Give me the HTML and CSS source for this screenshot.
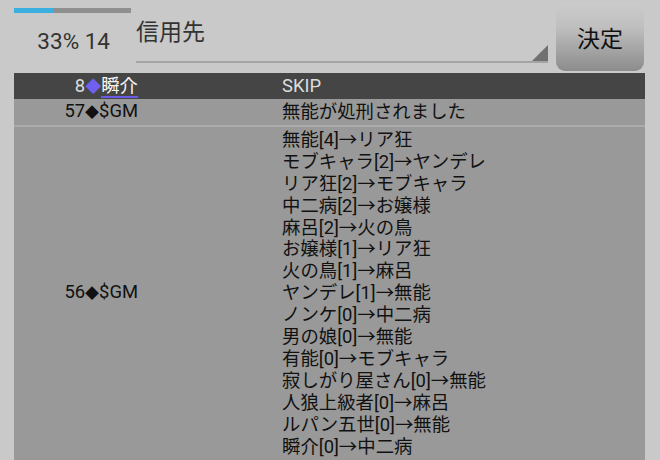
FILE: index.html
```html
<!DOCTYPE html>
<html lang="ja">
<head>
<meta charset="UTF-8">
<link rel="stylesheet" href="styles.css">
<title>投票</title>
</head>
<body>
  <div class="top-bar">
    <div class="status">
      <div class="progress"><div class="progress-fill"></div></div>
      <div class="status-text">33% 14</div>
    </div>
    <div class="spinner">
      <span class="spinner-text">信用先</span>
      <span class="spinner-arrow"></span>
    </div>
    <button class="decide">決定</button>
  </div>
  <div class="log">
    <div class="row head">
      <div class="who">8<span class="mark purple">◆</span><span class="name">瞬介</span></div>
      <div class="what">SKIP</div>
    </div>
    <div class="row">
      <div class="who">57<span class="mark">◆</span>$GM</div>
      <div class="what">無能が処刑されました</div>
    </div>
    <div class="row">
      <div class="who">56<span class="mark">◆</span>$GM</div>
      <div class="what">
        無能[4]→リア狂<br>
        モブキャラ[2]→ヤンデレ<br>
        リア狂[2]→モブキャラ<br>
        中二病[2]→お嬢様<br>
        麻呂[2]→火の鳥<br>
        お嬢様[1]→リア狂<br>
        火の鳥[1]→麻呂<br>
        ヤンデレ[1]→無能<br>
        ノンケ[0]→中二病<br>
        男の娘[0]→無能<br>
        有能[0]→モブキャラ<br>
        寂しがり屋さん[0]→無能<br>
        人狼上級者[0]→麻呂<br>
        ルパン五世[0]→無能<br>
        瞬介[0]→中二病
      </div>
    </div>
  </div>
</body>
</html>
```

FILE: styles.css
```css
html, body {
    margin: 0;
    height: 100%;
    overflow: hidden;
}
body {
    background-color: #c9c9c9;
    font-family: Roboto, "Noto Sans CJK JP", sans-serif;
    color: #222;
}
.top-bar {
    display: flex;
    height: 73px;
    padding-left: 14px;
}
.status {
    width: 117px;
    padding-top: 8px;
}
.progress {
    height: 5px;
    background-color: #8f8f8f;
}
.progress-fill {
    width: 39px;
    height: 5px;
    background-color: #3aafe0;
}
.status-text {
    margin-top: 14px;
    text-align: right;
    padding-right: 21px;
    font-size: 22.5px;
    line-height: 28px;
    color: #333;
}
.spinner {
    position: relative;
    width: 412px;
    height: 61px;
    margin-left: 5px;
    border-bottom: 2px solid #a4a4a4;
}
.spinner-text {
    display: block;
    margin-top: 17px;
    font-size: 23px;
    line-height: 32px;
    color: #333;
}
.spinner-arrow {
    position: absolute;
    right: 0;
    bottom: 0;
    width: 0;
    height: 0;
    border-left: 16px solid transparent;
    border-bottom: 16px solid #707070;
}
.decide {
    width: 88px;
    height: 69px;
    margin-top: 2px;
    margin-left: 8px;
    border: none;
    border-radius: 9px;
    background: linear-gradient(#cbcbcb, #c0c0c0 35%, #8c8c8c);
    font-family: Roboto, "Noto Sans CJK JP", sans-serif;
    font-size: 23px;
    color: #111;
    padding: 0;
}
.log {
    width: 631px;
    margin-left: 14px;
    background-color: #999;
}
.row {
    display: flex;
    align-items: center;
    border-bottom: 2px solid #ababab;
    font-size: 18.4px;
    line-height: 21.9px;
    color: #111;
}
.row .who {
    width: 124px;
    text-align: right;
    flex-shrink: 0;
}
.row .what {
    margin-left: 144px;
    padding: 2px 0;
}
.row.head {
    background-color: #454545;
    color: #ddd;
    height: 26px;
    border-bottom: none;
}
.row.head .what {
    padding: 0;
}
.mark {
    font-size: 14px;
}
.mark.purple {
    font-size: 16px;
    color: #7060f0;
}
.name {
    color: #f4f4f4;
    border-bottom: 2px solid #6a5ce8;
}
```
